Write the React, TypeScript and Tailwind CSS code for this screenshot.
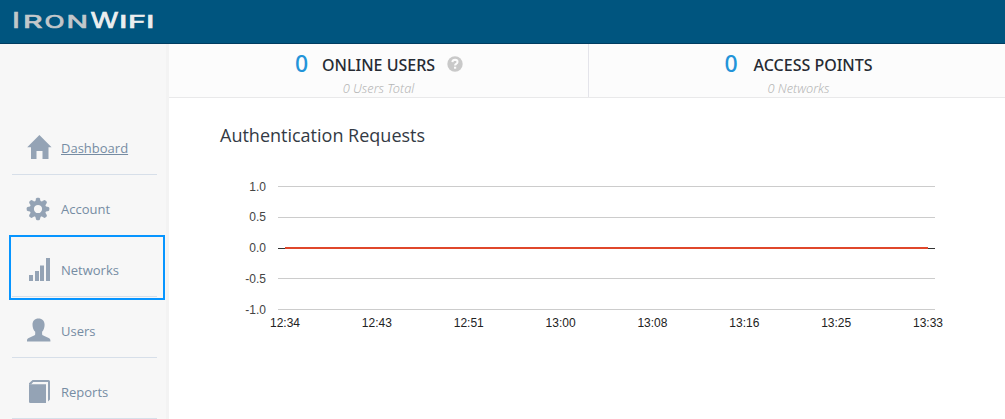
import React from 'react';

const HomeIcon = () => (
  <svg className="-mt-0.5" width="25" height="25" viewBox="0 0 25 25" fill="#94a3b5">
    <path d="M12.4 0 24.6 12.200H21.500V24H15.500V16H9.500V24H4V12.200H0.2Z" />
  </svg>
);

const GearIcon = () => (
  <svg className="-ml-px" width="24" height="24" viewBox="-12 -12 24 24" fill="none">
    <g fill="#94a3b5">
      {[0, 45, 90, 135, 180, 225, 270, 315].map((a) => (
        <path key={a} transform={`rotate(${a})`} d="M-2.8-7-1.9-10.5Q-1.6-11.3-.8-11.3H.8Q1.6-11.3 1.9-10.5L2.8-7Z" />
      ))}
    </g>
    <circle r="6.2" stroke="#94a3b5" strokeWidth="4.2" />
  </svg>
);

const BarsIcon = () => (
  <svg className="-mt-1" width="24" height="25" viewBox="0 0 24 25" fill="#94a3b5">
    <path d="M2 19h4v6H2ZM8 15h4v10H8ZM13 9.500h4V25h-4ZM19 2h4v23h-4Z" />
  </svg>
);

const UserIcon = () => (
  <svg className="-mt-0.5" width="24" height="24" viewBox="0 0 24 24" fill="#94a3b5">
    <path d="M11.5 0.5C15.3 0.5 17.6 3 17.6 6.7c0 2.8-1 5.600-2.500 7.100v2.200c0 .9.4 1.200 1.200 1.600l5.400 2.400c1.200.6 1.700 1.400 1.700 2.500v1H0v-1c0-1.100.5-1.900 1.700-2.500l5.400-2.400c.8-.4 1.100-.7 1.100-1.600v-2.200C6.500 12.300 5.500 9.500 5.500 6.700 5.500 3 7.700.5 11.500.5Z" />
  </svg>
);

const BookIcon = () => (
  <svg className="-mt-0.5" width="24" height="25" viewBox="0 0 24 25" fill="#94a3b5">
    <path d="M2 5.200h17V24H3.300Q2 24 2 22.700Z" />
    <path d="M2 5.500V4.200L5.600 1H21.500Q23 1 23 2.500V20.500L21 22.500V3H6.200L4 5.500Z" />
  </svg>
);

const items = [
  { label: 'Dashboard', Icon: HomeIcon, cls: 'underline' },
  { label: 'Account', Icon: GearIcon, cls: '' },
  { label: 'Networks', Icon: BarsIcon, cls: '' },
  { label: 'Users', Icon: UserIcon, cls: '' },
  { label: 'Reports', Icon: BookIcon, cls: '' },
];

const Logo = () => (
  <svg width="150" height="30" viewBox="0 0 150 30" aria-label="IronWifi">
    <g fontFamily="Inter, sans-serif" fontWeight="400" strokeWidth="0.7">
      <g fill="#c3c7ca" stroke="#c3c7ca">
        <text x="2" y="21.700" fontSize="21.500" textLength="8" lengthAdjust="spacingAndGlyphs">I</text>
        <text x="13" y="21.700" fontSize="17.500" textLength="19.500" lengthAdjust="spacingAndGlyphs">R</text>
        <text x="34.500" y="21.700" fontSize="17.500" textLength="20" lengthAdjust="spacingAndGlyphs">O</text>
        <text x="56.500" y="21.700" fontSize="17.500" textLength="21.500" lengthAdjust="spacingAndGlyphs">N</text>
      </g>
      <g fill="#eceeef" stroke="#eceeef">
        <text x="80.500" y="21.700" fontSize="21.500" textLength="28" lengthAdjust="spacingAndGlyphs">W</text>
        <text x="109" y="21.700" fontSize="17.500" textLength="8.500" lengthAdjust="spacingAndGlyphs">I</text>
        <text x="118" y="21.700" fontSize="17.500" textLength="18" lengthAdjust="spacingAndGlyphs">F</text>
        <text x="136" y="21.700" fontSize="17.500" textLength="8.500" lengthAdjust="spacingAndGlyphs">I</text>
      </g>
    </g>
  </svg>
);

const gridRows = [
  { y: 16.5, label: '1.0' },
  { y: 47, label: '0.5' },
  { y: 78, label: '0.0' },
  { y: 108.5, label: '-0.5' },
  { y: 139.5, label: '-1.0' },
];
const times = ['12:34', '12:43', '12:51', '13:00', '13:08', '13:16', '13:25', '13:33'];

const Chart = () => (
  <svg width="736" height="170" viewBox="0 0 736 170" fontFamily="Liberation Sans, Arial, sans-serif" fontSize="12">
    {gridRows.map((r) => (
      <g key={r.label}>
        <path d={`M58 ${r.y}H715`} shapeRendering="crispEdges" stroke={r.label === '0.0' ? '#333333' : '#cccccc'} />
        <text x="46" y={Math.floor(r.y - 0.1) + 5} textAnchor="end" fill="#444444">{r.label}</text>
      </g>
    ))}
    <path d="M65 78H708" stroke="#e0472b" strokeWidth="2" />
    {times.map((t, i) => (
      <text key={t} x={65 + i * 91.86} y="156.700" textAnchor="middle" fill="#222222">{t}</text>
    ))}
  </svg>
);

export default function App() {
  return (
    <div className="flex h-[419px] w-full flex-col overflow-hidden bg-white font-['Open_Sans',sans-serif]">
      <header className="h-11 shrink-0 border-b border-[#003d61] bg-[#00557f] pt-[6px] pl-[10px]">
        <Logo />
      </header>
      <div className="flex min-h-0 flex-1">
        <aside className="relative w-[169px] shrink-0 border-r-[3px] border-[#f3f3f3] bg-[#f7f7f7] pt-[70px] pl-3">
          <nav className="w-[145px]">
            {items.map(({ label, Icon, cls }) => (
              <a key={label} className="flex h-[61px] items-center border-b border-[#d7dfe9] pt-2">
                <span className="flex w-[49px] pl-[15px]"><Icon /></span>
                <span className={`text-[13px] leading-5 text-[#768ca3] ${cls}`}>{label}</span>
              </a>
            ))}
          </nav>
          <div className="absolute top-[191px] left-[9px] h-[65px] w-[156px] border-2 border-[#0795ff]" />
        </aside>
        <main className="min-w-0 flex-1">
          <section className="flex h-[54px] border-b border-[#e9e9ea] bg-[#fcfcfc] font-['Noto_Sans',sans-serif]">
            <div className="w-[420px] border-r border-[#e4e4ea] text-center">
              <div className="flex h-[38px] items-center justify-center pl-px">
                <span className="mr-[14px] text-[23px] leading-[38px] font-medium text-[#2394d9]">0</span>
                <span className="mt-1 mr-3 text-[16px] font-medium text-[#262b33]">ONLINE USERS</span>
                <svg className="mt-1 -translate-y-px" width="16" height="16" viewBox="0 0 16 16">
                  <circle cx="8" cy="8" r="7.700" fill="#c9c9c9" />
                  <path d="M5.400 6.100Q5.600 3.800 8.100 3.800 10.500 3.900 10.500 6 10.500 7.200 9.100 8 8.100 8.500 8.100 9.500" fill="none" stroke="#fcfcfc" strokeWidth="2" />
                  <path d="M7 10.700h2.200v2H7Z" fill="#fcfcfc" />
                </svg>
              </div>
              <p className="text-[12.8px] leading-[13px] font-light text-[#b6b6b6] italic">0 Users Total</p>
            </div>
            <div className="flex-1 pl-[3px] text-center">
              <div className="flex h-[38px] items-center justify-center">
                <span className="mr-4 text-[23px] leading-[38px] font-medium text-[#2394d9]">0</span>
                <span className="mt-1 text-[16px] font-medium text-[#262b33]">ACCESS POINTS</span>
              </div>
              <p className="text-[12.8px] leading-[13px] font-light text-[#b6b6b6] italic">0 Networks</p>
            </div>
          </section>
          <section className="pt-6 pl-[51px]">
            <h2 className="mb-[22px] text-[18px] leading-[26px] text-[#333a44]">Authentication Requests</h2>
            <Chart />
          </section>
        </main>
      </div>
    </div>
  );
}
